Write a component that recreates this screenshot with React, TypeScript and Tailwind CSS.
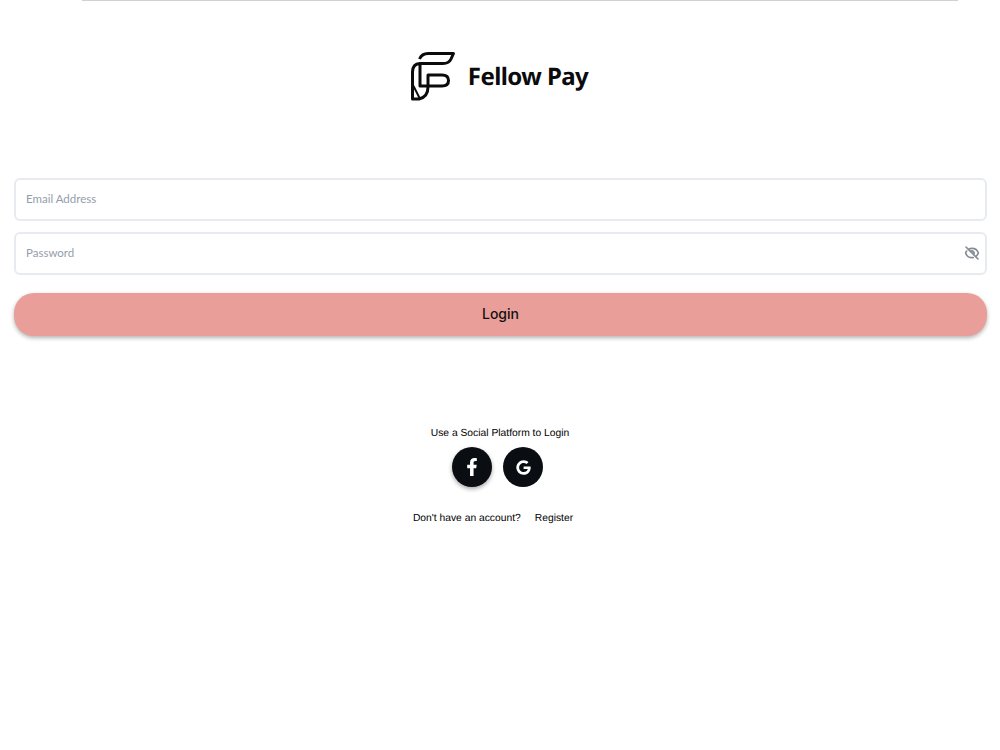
import React from 'react';
import { FaFacebookF, FaGoogle } from 'react-icons/fa';
import { HiOutlineEyeOff } from 'react-icons/hi';

const Logo = () => (
  <svg width="46" height="50" viewBox="0 0 46 50" fill="none" stroke="#0b0b0b" strokeWidth="3" strokeLinejoin="round">
    <path d="M9.5 8 Q12 2.5 18 2.5 L43.5 2.5 L41 8 Q39 12.5 33 12.5 L10 12.5 Q2.5 13 2.5 21 L2.5 48 L9 48 Q18 46 18 36 L18 24 L32 24 Q38.5 24 38.5 29.5 Q38.5 35 32 35 L10 35 L10 13" />
    <path d="M3.5 35 L9.5 47" strokeWidth="2" />
  </svg>
);

export default function App() {
  return (
    <div className="min-h-[750px] bg-white font-['Liberation_Sans',sans-serif] [text-rendering:geometricPrecision]">
      <div className="mr-[42px] ml-[82px] h-px bg-[#cfd2d2]" />
      <div className="mt-[50px] mr-[2px] flex h-[50px] items-center justify-center gap-[12px]">
        <Logo />
        <span className="pt-[2px] font-['Noto_Sans',sans-serif] text-[24px] leading-none font-bold tracking-[-0.57px] text-[#0b0b0b]">Fellow Pay</span>
      </div>

      <form className="mt-[77px] flex flex-col pr-[13px] pl-[14px]">
        <input
          placeholder="Email Address"
          className="h-[43px] w-full rounded-[6px] border-2 border-[#e7ebf0] bg-white px-[10px] pb-[2px] font-['Lato',sans-serif] text-[11.5px] outline-none placeholder:text-[#949daa]"
        />
        <div className="relative mt-[11px]">
          <input
            type="password"
            placeholder="Password"
            className="h-[43px] w-full rounded-[6px] border-2 border-[#e7ebf0] bg-white px-[10px] pb-[2px] font-['Lato',sans-serif] text-[11.5px] outline-none placeholder:text-[#949daa]"
          />
          <HiOutlineEyeOff className="absolute top-[13px] right-[7px] h-[16px] w-[16px] text-[#858c96] [&_path]:[stroke-width:2.4]" />
        </div>
        <button
          type="button"
          className="mt-[18px] h-[43px] w-full rounded-[20px] bg-[#e99e99] pb-[2px] font-['Inter',sans-serif] text-[14px] font-medium text-[#111] shadow-[0_2px_4px_rgba(0,0,0,0.3)]"
        >
          Login
        </button>
      </form>

      <div className="mt-[91px] flex flex-col items-center text-[10.3px] text-black">
        <p className="leading-[14px]">Use a Social Platform to Login</p>
        <div className="mt-[6px] mr-[5px] flex gap-[11px]">
          <div className="flex h-10 w-10 items-center justify-center rounded-full bg-[#0a0e12] text-white shadow-[0_2px_4px_rgba(0,0,0,0.35)]">
            <FaFacebookF className="h-[18px] w-[18px]" />
          </div>
          <div className="flex h-10 w-10 items-center justify-center rounded-full bg-[#0a0e12] text-white">
            <FaGoogle className="h-[15px] w-[15px]" />
          </div>
        </div>
        <div className="mt-[24px] mr-[14px] flex gap-[14px] pt-px leading-[14px]">
          <span>Don't have an account?</span>
          <span>Register</span>
        </div>
      </div>
    </div>
  );
}
